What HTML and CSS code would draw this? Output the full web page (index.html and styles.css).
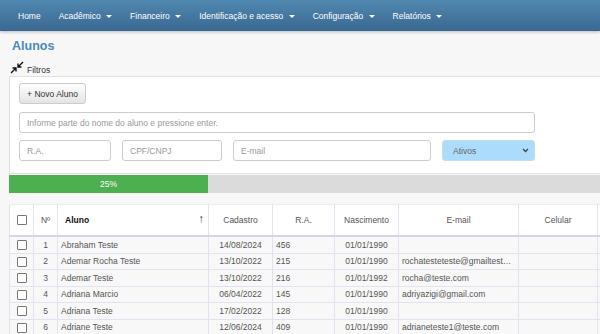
FILE: index.html
```html
<!DOCTYPE html>
<html lang="pt-BR">
<head>
    <meta charset="UTF-8">
    <meta name="viewport" content="width=device-width, initial-scale=1.0">
    <title>Alunos</title>
    <link rel="stylesheet" href="styles.css">
</head>
<body>
    <nav class="navbar">
        <a class="nav-item">Home</a>
        <a class="nav-item">Acadêmico <span class="caret"></span></a>
        <a class="nav-item">Financeiro <span class="caret"></span></a>
        <a class="nav-item">Identificação e acesso <span class="caret"></span></a>
        <a class="nav-item">Configuração <span class="caret"></span></a>
        <a class="nav-item">Relatórios <span class="caret"></span></a>
    </nav>

    <div class="page">
        <h1 class="title">Alunos</h1>

        <div class="filters-toggle">
            <svg class="compress-icon" width="14" height="13" viewBox="0 0 14 13">
                <path d="M13 1 L8 6 M8 2.5 L8 6 L11.5 6" fill="none" stroke="#111" stroke-width="1.4"/>
                <path d="M1 12 L6 7 M2.5 7 L6 7 L6 10.5" fill="none" stroke="#111" stroke-width="1.4"/>
            </svg>
            <span>Filtros</span>
        </div>

        <div class="panel">
            <button class="btn">+ Novo Aluno</button>
            <input class="field field-search" type="text" placeholder="Informe parte do nome do aluno e pressione enter.">
            <div class="field-row">
                <input class="field field-ra" type="text" placeholder="R.A.">
                <input class="field field-cpf" type="text" placeholder="CPF/CNPJ">
                <input class="field field-email" type="text" placeholder="E-mail">
                <div class="select">
                    <span>Ativos</span>
                    <svg width="7" height="5" viewBox="0 0 7 5"><path d="M1 1 L3.5 3.5 L6 1" fill="none" stroke="#444" stroke-width="1.3"/></svg>
                </div>
            </div>
        </div>

        <div class="progress">
            <div class="progress-bar" style="width: 25%">25%</div>
        </div>

        <table class="grid">
            <colgroup>
                <col style="width: 24px">
                <col style="width: 24px">
                <col style="width: 151px">
                <col style="width: 64px">
                <col style="width: 62px">
                <col style="width: 64px">
                <col style="width: 120px">
                <col style="width: 79px">
                <col style="width: 104px">
                <col style="width: 104px">
            </colgroup>
            <thead>
                <tr>
                    <th><span class="check"></span></th>
                    <th>Nº</th>
                    <th class="th-name">Aluno <span class="sort">↑</span></th>
                    <th>Cadastro</th>
                    <th>R.A.</th>
                    <th>Nascimento</th>
                    <th>E-mail</th>
                    <th>Celular</th>
                    <th></th>
                    <th></th>
                </tr>
            </thead>
            <tbody id="rows"></tbody>
        </table>
    </div>

    <script>
        const alunos = [
            [1, 'Abraham Teste', '14/08/2024', '456', '01/01/1990', ''],
            [2, 'Ademar Rocha Teste', '13/10/2022', '215', '01/01/1990', 'rochatesteteste@gmailteste.com.br'],
            [3, 'Ademar Teste', '13/10/2022', '216', '01/01/1992', 'rocha@teste.com'],
            [4, 'Adriana Marcio', '06/04/2022', '145', '01/01/1990', 'adriyazigi@gmail.com'],
            [5, 'Adriana Teste', '17/02/2022', '128', '01/01/1990', ''],
            [6, 'Adriane Teste', '12/06/2024', '409', '01/01/1990', 'adrianeteste1@teste.com']
        ];

        document.getElementById('rows').innerHTML = alunos.map(a => `
            <tr>
                <td class="center"><span class="check"></span></td>
                <td class="center">${a[0]}</td>
                <td>${a[1]}</td>
                <td class="center">${a[2]}</td>
                <td>${a[3]}</td>
                <td class="center">${a[4]}</td>
                <td class="ellipsis">${a[5]}</td>
                <td></td>
                <td></td>
                <td></td>
            </tr>`).join('');
    </script>
</body>
</html>
```

FILE: styles.css
```css
body {
    font-family: "Liberation Sans", Arial, sans-serif;
    margin: 0;
    padding: 0;
    background: #f7f7f7;
    color: #555;
    font-size: 9px;
    overflow: hidden;
}
.navbar {
    display: flex;
    align-items: center;
    height: 31px;
    padding: 0 0 0 9px;
    background: linear-gradient(to bottom, #5088b0, #3a6891);
    box-shadow: 0 1px 3px rgba(0, 0, 0, 0.25);
}
.nav-item {
    color: #fff;
    font-size: 8.5px;
    padding: 0 9px;
    white-space: nowrap;
}
.caret {
    display: inline-block;
    width: 0;
    height: 0;
    margin-left: 3px;
    vertical-align: middle;
    border-top: 3px solid #fff;
    border-left: 3px solid transparent;
    border-right: 3px solid transparent;
}
.page {
    width: 796px;
    padding-left: 9px;
}
.title {
    margin: 8px 0 0 3px;
    font-size: 12.5px;
    font-weight: bold;
    color: #4a89b9;
    line-height: 15px;
}
.filters-toggle {
    display: flex;
    align-items: center;
    gap: 3px;
    margin: 7px 0 0 1px;
    height: 14px;
    color: #333;
    font-size: 8.5px;
}
.filters-toggle span {
    margin-top: 3px;
}
.compress-icon {
    display: block;
    margin-top: -1px;
}
.panel {
    margin-top: 1px;
    background: #fff;
    border: 1px solid #e0e0e0;
    border-right: none;
    padding: 6px 10px 10px 9px;
    height: 80px;
}
.btn {
    display: block;
    height: 21px;
    width: 67px;
    padding: 0;
    font-family: inherit;
    font-size: 8.5px;
    color: #333;
    background: linear-gradient(to bottom, #fff, #e4e4e4);
    border: 1px solid #ccc;
    border-radius: 3px;
}
.field {
    box-sizing: border-box;
    height: 21px;
    padding: 0 7px;
    font-family: inherit;
    font-size: 8.5px;
    color: #555;
    background: #fff;
    border: 1px solid #ccc;
    border-radius: 3px;
}
.field::placeholder {
    color: #999;
}
.field-search {
    display: block;
    width: 516px;
    margin-top: 8px;
}
.field-row {
    display: flex;
    gap: 11px;
    margin-top: 7px;
}
.field-ra {
    width: 92px;
}
.field-cpf {
    width: 100px;
}
.field-email {
    width: 198px;
}
.select {
    box-sizing: border-box;
    display: flex;
    align-items: center;
    justify-content: space-between;
    width: 93px;
    height: 21px;
    padding: 0 5px 0 10px;
    background: #abdcfb;
    border: 1px solid #c6dced;
    border-radius: 3px;
    color: #666;
    font-size: 8.5px;
}
.progress {
    margin-top: 1px;
    height: 18px;
    background: #dbdbdb;
}
.progress-bar {
    height: 18px;
    line-height: 18px;
    background: #4caf50;
    color: #fff;
    text-align: center;
    font-size: 8.5px;
}
.grid {
    margin-top: 11px;
    border-collapse: collapse;
    table-layout: fixed;
    width: 796px;
    font-size: 8.5px;
}
.grid th {
    height: 30px;
    padding: 0;
    background: #fff;
    border-left: 1px solid #e4e1f0;
    border-right: 1px solid #e4e1f0;
    border-top: 1px solid #eeecf5;
    border-bottom: 2px solid #d8d4e8;
    font-weight: normal;
    color: #555;
    text-align: center;
}
.grid th.th-name {
    text-align: left;
    padding-left: 7px;
    font-weight: bold;
    color: #111;
    position: relative;
}
.sort {
    position: absolute;
    right: 4px;
    top: 7px;
    font-weight: normal;
    font-size: 11px;
    color: #333;
}
.grid td {
    height: 15.5px;
    padding: 0 3px;
    background: #f8f8f8;
    border: 1px solid #e4e1f0;
    white-space: nowrap;
    color: #555;
}
.center {
    text-align: center;
}
.ellipsis {
    overflow: hidden;
    text-overflow: ellipsis;
}
.check {
    display: inline-block;
    vertical-align: middle;
    box-sizing: border-box;
    width: 10px;
    height: 10px;
    border: 1px solid #777;
    border-radius: 1px;
    background: #fff;
}
```
